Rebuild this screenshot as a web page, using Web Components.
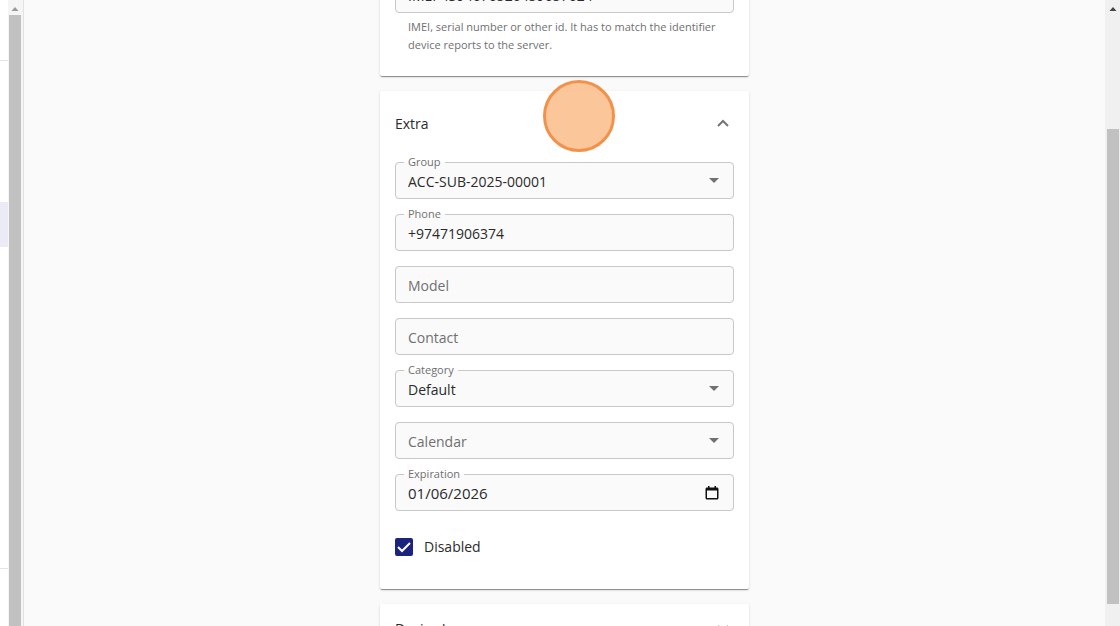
<!DOCTYPE html>
<html lang="en">
<head>
<meta charset="utf-8">
<title>Device</title>
<style>
  * { box-sizing: border-box; }
  body {
    margin: 0;
    height: 100vh;
    overflow: hidden;
    background: #fafafa;
    color: #2b2b2b;
    font: 14px/20px "Open Sans", "Noto Sans", sans-serif;
  }
</style>
</head>
<body>
<device-page>
  <form-panel class="first">
    <outlined-field label="Identifier" value="IMEI-4394676526459657624" helper="IMEI, serial number or other id. It has to match the identifier device reports to the server."></outlined-field>
  </form-panel>
  <form-panel heading="Extra" open>
    <outlined-field label="Group" type="select" value="ACC-SUB-2025-00001"></outlined-field>
    <outlined-field label="Phone" type="tel" value="+97471906374"></outlined-field>
    <outlined-field label="Model"></outlined-field>
    <outlined-field label="Contact"></outlined-field>
    <outlined-field label="Category" type="select" value="Default"></outlined-field>
    <outlined-field label="Calendar" type="select"></outlined-field>
    <outlined-field label="Expiration" type="date" value="01/06/2026"></outlined-field>
    <check-option label="Disabled"></check-option>
  </form-panel>
  <form-panel heading="Device Image"></form-panel>
</device-page>
<click-marker></click-marker>

<script>
class DevicePage extends HTMLElement {
  constructor() {
    super();
    this.attachShadow({ mode: 'open' });
  }

  connectedCallback() {
    this.shadowRoot.innerHTML = `
      <style>
        :host { display: flex; height: 100%; }
        side-rail, scroll-track { flex: none; }
        main {
          flex: 1;
          overflow: hidden;
          display: flex;
          flex-direction: column;
          align-items: center;
          gap: 15px;
        }
        ::slotted(form-panel) { width: 100%; max-width: 369px; flex: none; }
        ::slotted(.first) { margin-top: -40px; }
      </style>
      <side-rail></side-rail>
      <scroll-track class="left"></scroll-track>
      <main><slot></slot></main>
      <scroll-track class="right"></scroll-track>
    `;
  }
}

class SideRail extends HTMLElement {
  constructor() {
    super();
    this.attachShadow({ mode: 'open' });
  }

  connectedCallback() {
    this.shadowRoot.innerHTML = `
      <style>
        :host { display: flex; flex-direction: column; width: 8px; background: #fff; }
        .top { height: 61px; border-bottom: 1px solid #e4e4e4; }
        .list { flex: 1; padding-top: 141px; }
        .selected { height: 45px; background: #ebebf5; }
        .bottom { height: 58px; border-top: 1px solid #e4e4e4; }
        div { box-sizing: border-box; }
      </style>
      <div class="top"></div>
      <div class="list"><div class="selected"></div></div>
      <div class="bottom"></div>
    `;
  }
}

class ScrollTrack extends HTMLElement {
  constructor() {
    super();
    this.attachShadow({ mode: 'open' });
  }

  connectedCallback() {
    this.shadowRoot.innerHTML = `
      <style>
        :host {
          box-sizing: border-box;
          display: flex;
          flex-direction: column;
          width: 15px;
          background: #f0f0f0;
          color: #444;
          padding: 0 1px 0 2px;
        }
        :host(.left) {
          width: 16px;
          background: #f5f5f5;
          color: #999;
          padding: 0 2px 0 1px;
          border-right: 1px solid #e2e2e2;
        }
        svg { display: block; width: 12px; height: 15px; flex: none; }
        .thumb { flex: 1; background: #c1c1c1; }
        :host(.right) .thumb { margin: 114px 0 22px; }
      </style>
      <svg viewBox="0 0 12 15"><path d="M2.500 11L6 7l3.500 4z" fill="currentColor"/></svg>
      <div class="thumb"></div>
    `;
  }
}

class FormPanel extends HTMLElement {
  constructor() {
    super();
    this.attachShadow({ mode: 'open' });
  }

  connectedCallback() {
    const heading = this.getAttribute('heading');
    const open = this.hasAttribute('open');
    const icon = open ? 'M2 9l5-5 5 5' : 'M2 4l5 5 5-5';
    this.shadowRoot.innerHTML = `
      <style>
        :host {
          display: block;
          background: #fff;
          border-radius: 2px;
          box-shadow: 0 2px 1px -1px rgba(0, 0, 0, .3), 0 1px 1px rgba(0, 0, 0, .14), 0 1px 3px rgba(0, 0, 0, .12);
        }
        button {
          display: flex;
          justify-content: space-between;
          align-items: center;
          width: 100%;
          height: 65px;
          padding: 0 19px 0 15px;
          border: 0;
          background: none;
          color: inherit;
          font: inherit;
        }
        button:not([aria-expanded=true]) { height: 50px; }
        svg { width: 14px; height: 14px; fill: none; stroke: #757575; stroke-width: 2; }
        .body { display: flex; flex-direction: column; gap: 15px; padding: 6px 15px 22px; }
        :host(.first) .body { padding: 16px 15px 22px; }
      </style>
      ${heading ? `<button type="button" aria-expanded="${open}"><span>${heading}</span>
        <svg viewBox="0 0 14 14" aria-hidden="true"><path d="${icon}"/></svg></button>` : ''}
      ${open || !heading ? '<div class="body"><slot></slot></div>' : ''}
    `;
  }
}

class OutlinedField extends HTMLElement {
  constructor() {
    super();
    this.attachShadow({ mode: 'open' });
  }

  connectedCallback() {
    const label = this.getAttribute('label');
    const value = this.getAttribute('value') || '';
    const type = this.getAttribute('type') || 'text';
    const helper = this.getAttribute('helper');

    let control = `<input id="control" type="${type === 'tel' ? 'tel' : 'text'}" value="${value}">`;
    if (type === 'select') {
      control = `<select id="control"><option>${value}</option></select>
        <svg class="arrow" viewBox="0 0 10 5" aria-hidden="true"><path d="M0 0h10L5 5z"/></svg>`;
    }
    if (type === 'date') {
      control += `<svg class="calendar" viewBox="0 0 14 14" aria-hidden="true">
        <path fill-rule="evenodd" d="M3 0h1.500v1.500h5V0H11v1.500h1c.8 0 1.500.7 1.500 1.500v9c0 .8-.7 1.500-1.500 1.500H2C1.200 13.500.5 12.800.5 12V3c0-.8.7-1.500 1.500-1.500h1zM2 4.500V12h10V4.500z"/></svg>`;
    }

    this.shadowRoot.innerHTML = `
      <style>
        :host { display: block; }
        * { box-sizing: border-box; }
        fieldset {
          position: relative;
          display: flex;
          align-items: center;
          height: 37px;
          margin: 0;
          padding: 0;
          min-width: 0;
          border: 1px solid #c8c8c8;
          border-radius: 4px;
          background: #fafafa;
        }
        label {
          position: absolute;
          left: 8px;
          top: -9px;
          padding: 0 4px;
          font-size: 11px;
          line-height: 16px;
          color: #707070;
          background: linear-gradient(#fff 8px, #fafafa 8px);
        }
        .empty label { top: 9px; font-size: 14px; line-height: 20px; background: none; pointer-events: none; }
        input, select {
          appearance: none;
          width: 100%;
          height: 100%;
          padding: 2px 12px 0;
          border: 0;
          outline: 0;
          background: none;
          color: inherit;
          font: inherit;
        }
        .date input { padding-top: 0; font-size: 15px; }
        svg { position: absolute; pointer-events: none; }
        .arrow { right: 14px; width: 10px; height: 5px; fill: #707070; }
        .calendar { right: 14px; width: 14px; height: 14px; fill: #111; }
        p { margin: 5px 13px 0; font-size: 11px; line-height: 18px; color: #707070; }
      </style>
      <fieldset class="${type} ${value ? '' : 'empty'}">
        <label for="control">${label}</label>
        ${control}
      </fieldset>
      ${helper ? `<p>${helper}</p>` : ''}
    `;
  }
}

class CheckOption extends HTMLElement {
  constructor() {
    super();
    this.attachShadow({ mode: 'open' });
  }

  connectedCallback() {
    this.shadowRoot.innerHTML = `
      <style>
        :host { display: block; }
        label { display: flex; align-items: center; gap: 11px; height: 41px; }
        .box { display: grid; width: 18px; height: 18px; }
        .box > * { grid-area: 1 / 1; }
        input { appearance: none; width: 18px; height: 18px; margin: 0; border-radius: 2px; background: #1a237e; }
        svg { width: 18px; height: 18px; fill: none; stroke: #fff; stroke-width: 2; pointer-events: none; }
      </style>
      <label>
        <span class="box">
          <input type="checkbox" checked>
          <svg viewBox="0 0 18 18" aria-hidden="true"><path d="M3 9l4 4 8-8"/></svg>
        </span>
        <span>${this.getAttribute('label')}</span>
      </label>
    `;
  }
}

class ClickMarker extends HTMLElement {
  constructor() {
    super();
    this.attachShadow({ mode: 'open' });
  }

  connectedCallback() {
    this.shadowRoot.innerHTML = `
      <style>
        :host {
          box-sizing: border-box;
          position: absolute;
          left: calc(50% - 17px);
          top: 80px;
          width: 72px;
          height: 72px;
          border: 3px solid #f2924a;
          border-radius: 50%;
          background: rgba(251, 176, 116, .72);
          pointer-events: none;
        }
      </style>
    `;
  }
}

customElements.define('device-page', DevicePage);
customElements.define('side-rail', SideRail);
customElements.define('scroll-track', ScrollTrack);
customElements.define('form-panel', FormPanel);
customElements.define('outlined-field', OutlinedField);
customElements.define('check-option', CheckOption);
customElements.define('click-marker', ClickMarker);
</script>
</body>
</html>
